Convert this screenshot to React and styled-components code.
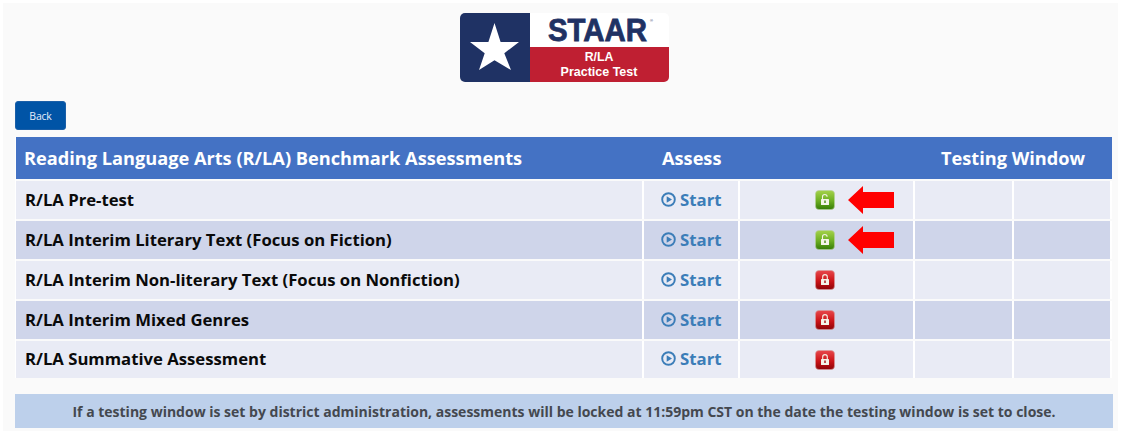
import React from "react";
import styled, { createGlobalStyle } from "styled-components";

const Global = createGlobalStyle`
  html, body { margin: 0; padding: 0; background: #fff; }
  body { font-family: "Open Sans", "Noto Sans", sans-serif; }
`;
const Page = styled.div`
  width: 1121px; height: 431px; box-sizing: border-box; overflow: hidden;
  padding: 3px 0 0 3px;
`;
const Panel = styled.div`
  background: #fafafa; width: 1115px; height: 428px; box-sizing: border-box;
  padding: 10px 9px 0 12px;
  display: flex; flex-direction: column;
`;
const LogoRow = styled.div`
  display: flex; justify-content: center; height: 69px;
  margin-left: 4px;
`;
const BackButton = styled.button`
  display: block; width: 51px; height: 29px; margin-top: 19px; padding: 0;
  background: #0054a6; color: #e6eefa; border: 1px solid #1a5fa8; border-radius: 3px;
  font: 400 10.5px "Open Sans", sans-serif; letter-spacing: -0.2px;
`;
const Table = styled.div`
  margin-top: 7px; width: 1097px; display: grid;
  grid-template-columns: 628px 96px 175px 99px 98px;
  border-left: 1px solid #fff;
`;
const Head = styled.div`
  grid-column: 1 / -1; height: 42px; background: #4472c4; display: grid;
  grid-template-columns: 628px 271px 197px; align-items: center; color: #fff;
  font-size: 18.2px; font-weight: 700; margin-bottom: 2px;
`;
const HeadCell = styled.div`
  padding-left: ${(p) => p.$pl}px; white-space: nowrap;
`;
const Cell = styled.div`
  height: ${(p) => p.$h}px; background: ${(p) => (p.$alt ? "#cfd5ea" : "#e9ebf5")};
  border-right: 2px solid #fff;
  margin-bottom: ${(p) => p.$gap}px;
  display: flex; align-items: center;
  box-sizing: border-box;
`;
const NameCell = styled(Cell)`
  padding: 0 0 2px 9px; color: #0a0a0a; font-size: 16.7px; font-weight: 700; white-space: nowrap;
`;
const StartCell = styled(Cell)`
  padding: 0 0 2px 17px; gap: 4px; color: #3b7db8; font-size: 16.8px; font-weight: 700;
`;
const LockCell = styled(Cell)`
  padding-left: 75px; gap: 13px;
`;
const Notice = styled.div`
  margin-top: 16px; width: 1098px; height: 34px; background: #bdd0eb;
  display: flex; align-items: center; justify-content: center;
  color: #44484f; font-size: 14px; font-weight: 700; white-space: nowrap;
`;

const Logo = () => (
  <svg width="209" height="69" viewBox="0 0 209 69">
    <defs><clipPath id="lc"><rect width="209" height="69" rx="5" /></clipPath></defs>
    <g clipPath="url(#lc)">
      <rect width="209" height="69" fill="#fff" />
      <rect x="70" y="34" width="139" height="35" fill="#bf1f32" />
      <rect width="70" height="69" fill="#1f3264" />
      <polygon fill="#fff" points="34.500,10 40.600,29 59,29 44.300,40.200 51,57 34.500,47.300 19,57 24.700,40.200 10,29 28.400,29" />
      <text x="88" y="28" fontFamily="Liberation Sans" fontWeight="700" fontSize="30.500" fill="#1f3264" textLength="99" lengthAdjust="spacingAndGlyphs" stroke="#1f3264" strokeWidth=".8">STAAR</text>
      <text x="190" y="9" fontFamily="Liberation Sans" fontSize="4" fill="#1f3264">®</text>
      <text x="139" y="48" textAnchor="middle" fontFamily="Liberation Sans" fontWeight="700" fontSize="12.300" fill="#fff">R/LA</text>
      <text x="139" y="63" textAnchor="middle" fontFamily="Liberation Sans" fontWeight="700" fontSize="12.500" fill="#fff">Practice Test</text>
    </g>
  </svg>
);

const PlayIcon = () => (
  <svg width="15" height="15" viewBox="0 0 15 15">
    <circle cx="7.500" cy="7.500" r="6.300" fill="none" stroke="#3b7db8" strokeWidth="1.900" />
    <polygon points="5.700,4.200 11,7.500 5.700,10.800" fill="#3b7db8" />
  </svg>
);

const LockIcon = ({ open }) => {
  const id = open ? "gOpen" : "gLock";
  return (
    <svg width="20" height="20" viewBox="0 0 20 20">
      <defs>
        <linearGradient id={id} x1="0" y1="0" x2="0" y2="1">
          <stop offset="0" stopColor={open ? "#a4d24a" : "#e8484c"} />
          <stop offset="0.55" stopColor={open ? "#6cae22" : "#cc1418"} />
          <stop offset="1" stopColor={open ? "#357c06" : "#8e0408"} />
        </linearGradient>
      </defs>
      <rect x="0.500" y="0.500" width="19" height="19" rx="3.500" fill={`url(#${id})`} stroke={open ? "#b6d09a" : "#d89a9a"} strokeWidth=".6" />
      <path d={open ? "M7.500 9V6.800a2.300 2.300 0 0 1 4.600 0" : "M7.700 9V6.900a2.300 2.300 0 0 1 4.600 0V9"} fill="none" stroke="#f2f2e6" strokeWidth="1.100" />
      <rect x="6" y="9" width="8" height="6" rx=".6" fill="#f5f5ea" />
      <rect x="9.300" y="10.500" width="1.400" height="2.500" fill={open ? "#4b8a12" : "#a80c10"} />
    </svg>
  );
};

const Arrow = () => (
  <svg width="47" height="28" viewBox="0 0 47 28">
    <polygon points="0,14 15,0 15,6 46,6 46,22 15,22 15,28" fill="#ff0000" />
  </svg>
);

const rows = [
  ["R/LA Pre-test", true, 38, 2, false],
  ["R/LA Interim Literary Text (Focus on Fiction)", true, 38, 2, true],
  ["R/LA Interim Non-literary Text (Focus on Nonfiction)", false, 38, 2, false],
  ["R/LA Interim Mixed Genres", false, 38, 2, true],
  ["R/LA Summative Assessment", false, 37, 0, false],
];

export default function App() {
  return (
    <Page>
      <Global />
      <Panel>
        <LogoRow><Logo /></LogoRow>
        <BackButton>Back</BackButton>
        <Table>
          <Head>
            <HeadCell $pl={8}>Reading Language Arts (R/LA) Benchmark Assessments</HeadCell>
            <HeadCell $pl={18}>Assess</HeadCell>
            <HeadCell $pl={26}>Testing Window</HeadCell>
          </Head>
          {rows.map(([name, open, h, gap, alt]) => (
            <React.Fragment key={name}>
              <NameCell $h={h} $gap={gap} $alt={alt}>{name}</NameCell>
              <StartCell $h={h} $gap={gap} $alt={alt}><PlayIcon />Start</StartCell>
              <LockCell $h={h} $gap={gap} $alt={alt}>
                <LockIcon open={open} />
                {open && <Arrow />}
              </LockCell>
              <Cell $h={h} $gap={gap} $alt={alt} />
              <Cell $h={h} $gap={gap} $alt={alt} />
            </React.Fragment>
          ))}
        </Table>
        <Notice>If a testing window is set by district administration, assessments will be locked at 11:59pm CST on the date the testing window is set to close.</Notice>
      </Panel>
    </Page>
  );
}
